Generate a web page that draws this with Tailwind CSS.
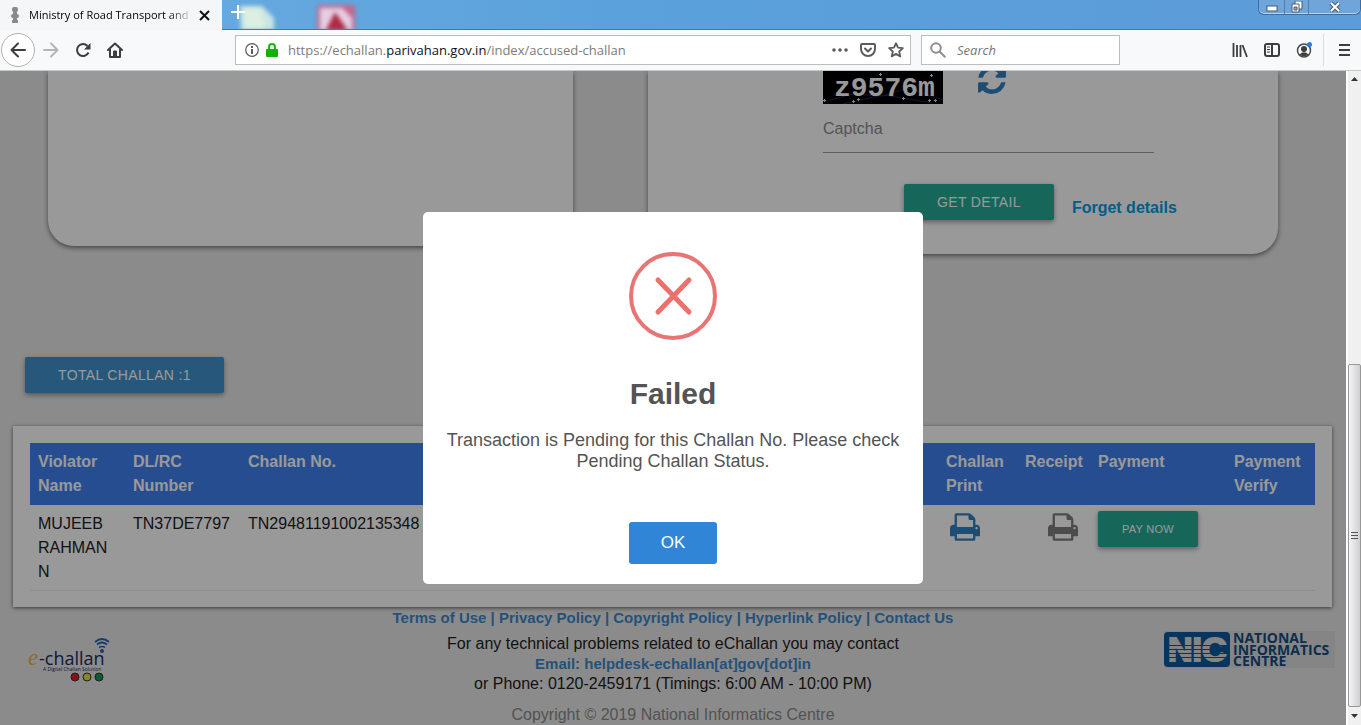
<!DOCTYPE html>
<html lang="en">
<head>
  <meta charset="UTF-8" />
  <meta name="viewport" content="width=device-width, initial-scale=1.0" />
  <title>Ministry of Road Transport and Highways</title>
  <script src="https://cdn.jsdelivr.net/npm/@tailwindcss/browser@4"></script>
</head>
<body class="h-screen flex flex-col overflow-hidden bg-[#e8e8e8] font-['Liberation_Sans',sans-serif] text-base text-[#212121]">

  <!-- Tab strip -->
  <header class="relative flex h-[30px] shrink-0 bg-linear-to-r from-[#6aade2] via-[#5aa0da] to-[#5c9cd8]">
    <div class="flex w-[222px] items-center bg-[#f5f6f7] pl-2 font-['Open_Sans',sans-serif]">
      <svg class="h-4 w-[13px] shrink-0" viewBox="0 0 13 16" fill="#8a8a8a" aria-hidden="true">
        <rect x="4" y="0" width="6" height="5" rx="2"/><rect x="5" y="5" width="4" height="2"/><rect x="3" y="7" width="8" height="4" rx="2"/><rect x="5" y="10" width="4" height="3"/><rect x="4" y="13" width="6" height="3"/>
      </svg>
      <span class="ml-2 w-[164px] whitespace-nowrap text-[11px] text-black mask-r-from-85% mask-r-to-100%">Ministry of Road Transport and</span>
      <button class="ml-[3px] flex size-4 items-center justify-center" aria-label="Close tab">
        <svg class="size-[11px]" viewBox="0 0 11 11" stroke="#111" stroke-width="2"><path d="M1 1l9 9M10 1l-9 9"/></svg>
      </button>
    </div>
    <div class="relative flex-1 overflow-hidden border-b border-[#4577ad]">
      <!-- Desktop icons seen through the glass -->
      <svg class="absolute top-0 left-0 h-[30px] w-[160px] blur-[2px]" viewBox="0 0 160 30" aria-hidden="true">
        <path d="M18 6h22l12 12v14H19z" fill="#c9e6e4"/>
        <path d="M22 8h15l5 12v12H22z" fill="#dcefe0"/>
        <rect x="95" y="5" width="38" height="28" rx="3" fill="#c4678c"/>
        <path d="M98 8h22l10 10v14H98z" fill="#e5cfe4"/>
        <path d="M103 32l10-20 14 20z" fill="#b0283f"/>
      </svg>
      <button class="absolute top-[5px] left-[9px] size-[14px]" aria-label="New tab">
        <svg class="size-[14px]" viewBox="0 0 14 14" stroke="#fff" stroke-width="2"><path d="M7 0v14M0 7h14"/></svg>
      </button>
    </div>
    <!-- Window controls -->
    <div class="absolute top-0 right-0 flex h-[15px] w-[103px] rounded-b-md border border-t-0 border-[#3f6c9e] bg-[#6fa5d9] shadow-[inset_0_-1px_0_#b5d4ef]">
      <button class="flex w-[26px] items-center justify-center border-r border-[#4f7fb2]" aria-label="Minimize">
        <svg class="h-[10px] w-3" viewBox="0 0 12 10"><rect x="1" y="4" width="10" height="5" fill="#fff" stroke="#4a5a70"/></svg>
      </button>
      <button class="flex w-6 items-center justify-center border-r border-[#4f7fb2]" aria-label="Restore">
        <svg class="h-3 w-3" viewBox="0 0 12 12" fill="#fff" stroke="#4a5a70"><path d="M4 0h7v8H4z"/><path d="M1 3h7v8H1z"/><path d="M3 6h3v3H3z" fill="#7fb0de"/></svg>
      </button>
      <button class="flex flex-1 items-center justify-center" aria-label="Close window">
        <svg class="h-3 w-3" viewBox="0 0 12 12"><path d="M2 2l8 8M10 2l-8 8" stroke="#4a5a70" stroke-width="4"/><path d="M2 2l8 8M10 2l-8 8" stroke="#fff" stroke-width="2"/></svg>
      </button>
    </div>
  </header>

  <!-- Toolbar -->
  <nav class="flex h-[41px] shrink-0 items-center border-b border-[#c8c8c8] bg-[#f8f9fa] pl-px font-['Open_Sans',sans-serif] text-[13px] text-[#3d3d3d]">
    <div class="flex w-[234px] items-center">
      <button class="flex size-[34px] items-center justify-center rounded-full border border-[#b0b0b0] bg-white" aria-label="Back">
        <svg class="size-4" viewBox="0 0 16 16" fill="none" stroke="currentColor" stroke-width="2" stroke-linecap="round" stroke-linejoin="round"><path d="M15 8H1.500M8 1.500L1.500 8 8 14.500"/></svg>
      </button>
      <button class="flex size-8 items-center justify-center text-[#b5b5b5]" aria-label="Forward">
        <svg class="size-4" viewBox="0 0 16 16" fill="none" stroke="currentColor" stroke-width="2" stroke-linecap="round" stroke-linejoin="round"><path d="M1 8h13.500M8 1.500L14.500 8 8 14.500"/></svg>
      </button>
      <button class="flex size-8 items-center justify-center" aria-label="Reload">
        <svg class="size-4" viewBox="0 0 16 16" fill="none" stroke="currentColor" stroke-width="2"><path d="M13.500 10.500A6 6 0 1 1 12.500 4"/><path d="M15.500 1v6.500H9z" fill="currentColor" stroke="none"/></svg>
      </button>
      <button class="flex size-8 items-center justify-center" aria-label="Home">
        <svg class="size-4" viewBox="0 0 16 16" fill="none" stroke="currentColor" stroke-width="2" stroke-linejoin="round" stroke-linecap="round"><path d="M1 8l7-6.500L15 8M3 7.500V15h10V7.500"/><path d="M6.500 14.500V9h3v5.500z" fill="currentColor" stroke-width="1"/></svg>
      </button>
    </div>

    <div class="flex h-[30px] flex-1 items-center border border-[#bdbdbd] bg-white pl-[9px]">
      <svg class="size-[14px]" viewBox="0 0 14 14" aria-hidden="true"><circle cx="7" cy="7" r="6.300" fill="none" stroke="#5c5c5c" stroke-width="1.200"/><rect x="6" y="6" width="2" height="5" fill="#5c5c5c"/><rect x="6" y="3" width="2" height="2" fill="#5c5c5c"/></svg>
      <svg class="ml-[7px] h-[14px] w-3" viewBox="0 0 12 14" aria-hidden="true"><path d="M3 7V4a3 3 0 0 1 6 0v3" fill="none" stroke="#12bc00" stroke-width="2"/><rect x="0" y="6" width="12" height="8" rx="1" fill="#12b005"/></svg>
      <p class="ml-[10px] flex-1 whitespace-nowrap pt-[2px] text-[#7c7c7c]">https://echallan.<span class="text-[#111]">parivahan.gov.in</span>/index/accused-challan</p>
      <button class="flex w-7 justify-center text-[#5c5c5c]" aria-label="Page actions">
        <svg class="h-4 w-4" viewBox="0 0 16 16" fill="currentColor"><circle cx="2" cy="8" r="1.800"/><circle cx="8" cy="8" r="1.800"/><circle cx="14" cy="8" r="1.800"/></svg>
      </button>
      <button class="flex w-7 justify-center text-[#5c5c5c]" aria-label="Save to Pocket">
        <svg class="h-4 w-4" viewBox="0 0 16 16" fill="none" stroke="currentColor" stroke-width="2" stroke-linecap="round" stroke-linejoin="round"><path d="M2 2h12a1 1 0 0 1 1 1v4a7 7 0 0 1-14 0V3a1 1 0 0 1 1-1z"/><path d="M5 6.500l3 3 3-3"/></svg>
      </button>
      <button class="flex w-7 justify-center text-[#5c5c5c]" aria-label="Bookmark">
        <svg class="h-4 w-4" viewBox="0 0 16 16" fill="none" stroke="currentColor" stroke-width="1.800" stroke-linejoin="round"><path d="M8 1.200l2 4.500 4.900.5-3.700 3.300 1.100 4.900L8 11.900l-4.300 2.500 1.100-4.900L1.100 6.200 6 5.700z"/></svg>
      </button>
    </div>

    <label class="ml-[10px] flex h-[30px] w-[199px] items-center border border-[#bdbdbd] bg-white pl-2">
      <svg class="h-4 w-4 shrink-0" viewBox="0 0 16 16" fill="none" stroke="#8e8e8e" stroke-width="2" stroke-linecap="round" aria-hidden="true"><circle cx="6" cy="6" r="4.800"/><path d="M9.800 9.800l5 5"/></svg>
      <input type="text" placeholder="Search" aria-label="Search" class="ml-[11px] w-full min-w-0 pt-[2px] outline-none placeholder:italic placeholder:text-[#777]" />
    </label>

    <div class="ml-[112px] flex h-full items-center pr-[10px]">
      <button aria-label="Library">
        <svg class="size-4" viewBox="0 0 16 16" fill="none" stroke="currentColor" stroke-width="1.800"><path d="M1.500 1v14M5 3v12M8.500 3v12M10.500 3l4.500 12"/></svg>
      </button>
      <button class="ml-4" aria-label="Sidebars">
        <svg class="size-4" viewBox="0 0 16 16" fill="none" stroke="currentColor" stroke-width="2"><rect x="1" y="2" width="14" height="12" rx="2"/><path d="M8 2v12"/><path d="M3 5h3M3 7.500h3M3 10h3" stroke-width="1"/></svg>
      </button>
      <button class="ml-4" aria-label="Account">
        <svg class="size-4" viewBox="0 0 16 16"><circle cx="8" cy="8.500" r="6.500" fill="none" stroke="#4a4a4a" stroke-width="1.500"/><circle cx="8" cy="7" r="3" fill="#3d3d3d"/><path d="M3.500 12.500Q8 8 12.500 12.500 8 16 3.500 12.500z" fill="#3d3d3d"/><circle cx="13.500" cy="2.500" r="2.500" fill="#2b7de0"/></svg>
      </button>
      <span class="ml-[11px] h-8 w-px bg-[#dcdcdc]"></span>
      <button class="ml-[14px]" aria-label="Open menu">
        <svg class="h-4 w-[13px]" viewBox="0 0 13 16" stroke="currentColor" stroke-width="2"><path d="M1 3h11M1 8h11M1 13h11"/></svg>
      </button>
    </div>
  </nav>

  <div class="flex min-h-0 flex-1">
    <div class="relative min-w-0 flex-1 overflow-hidden">

      <!-- Search forms -->
      <section class="grid grid-cols-[5fr_6fr] items-start gap-[75px] pr-[68px] pl-12">
        <div class="h-[175px] rounded-b-[26px] bg-white shadow-[0_2px_5px_rgba(0,0,0,0.5)]"></div>
        <form class="min-w-0 rounded-b-[26px] bg-white pr-[124px] pb-[34px] pl-[175px] shadow-[0_2px_5px_rgba(0,0,0,0.5)]">
          <div class="flex gap-[35px]">
            <svg class="h-[33px] w-[120px]" viewBox="0 0 120 33" role="img" aria-label="Captcha code">
              <rect width="120" height="33" fill="#000"/>
              <path d="M0 31l30-8 30 2 25-8 35 12M20 33l40-9 50 8" fill="none" stroke="#25255a"/>
              <text x="11" y="25" font-family="Liberation Mono, monospace" font-weight="bold" font-size="28" fill="#fff">z9576m</text>
              <path d="M0 29.500h3M1.500 28v3M29 30.500h3M30.500 29v3M34 28.500h3M35.500 27v3M79 27.500h3M80.500 26v3M105 29.500h3M106.500 28v3M111 29.500h3M112.500 28v3M107 4.500h3M108.500 3v3M56 3.500h3M57.500 2v3" stroke="#ddd"/>
            </svg>
            <button type="button" class="h-[23px]" aria-label="Refresh captcha">
              <svg class="h-[23px] w-7 fill-[#3380c0]" viewBox="0 274 1536 1262"><path d="M1511 928q0 5-1 7-64 268-268 434.500T764 1536q-146 0-282.500-55T238 1324l-129 129q-19 19-45 19t-45-19-19-45V960q0-26 19-45t45-19h448q26 0 45 19t19 45-19 45l-137 137q71 66 161 102t187 36q134 0 250-65t186-179q11-17 53-117 8-23 30-23h192q13 0 22.500 9.500t9.500 22.500zm25-800v448q0 26-19 45t-45 19h-448q-26 0-45-19t-19-45 19-45l138-138Q969 256 768 256q-134 0-250 65T332 500q-11 17-53 117-8 23-30 23H50q-13 0-22.500-9.500T18 608v-7q65-268 270-434.500T768 0q146 0 284 55.500T1297 212l130-129q19-19 45-19t45 19 19 45z"/></svg>
            </button>
          </div>
          <input type="text" placeholder="Captcha" aria-label="Captcha" class="block h-[49px] w-full border-b border-[#9e9e9e] pt-[2px] outline-none placeholder:text-[#8c8c8c]" />
          <div class="mt-[31px] ml-[81px] flex items-end gap-[18px] whitespace-nowrap">
            <button type="button" class="h-9 rounded-xs bg-[#26ab96] px-[33px] text-sm tracking-wide text-white shadow-[0_2px_5px_rgba(0,0,0,0.4)]">GET DETAIL</button>
            <a href="#" class="font-bold text-[#039be5]">Forget details</a>
          </div>
        </form>
      </section>

      <button class="mt-[103px] ml-[25px] block h-9 rounded-xs bg-[#4292cc] px-[33px] text-sm tracking-wide text-white shadow-[0_2px_5px_rgba(0,0,0,0.4)]">TOTAL CHALLAN :1</button>

      <!-- Challan list -->
      <section class="mt-[33px] mr-[14px] ml-[13px] bg-white px-[17px] pt-[17px] pb-4 shadow-[0_1px_4px_rgba(0,0,0,0.6)]">
        <table class="w-full table-fixed text-left">
          <colgroup>
            <col class="w-[95px]" /><col class="w-[115px]" /><col class="w-[190px]" /><col /><col class="w-[79px]" /><col class="w-[73px]" /><col class="w-[136px]" /><col class="w-[89px]" />
          </colgroup>
          <thead class="bg-[#4080f0] align-top text-white">
            <tr>
              <th class="px-2 py-[7px]">Violator Name</th>
              <th class="px-2 py-[7px]">DL/RC Number</th>
              <th class="px-2 py-[7px]">Challan No.</th>
              <th></th>
              <th class="px-2 py-[7px]">Challan Print</th>
              <th class="px-2 py-[7px]">Receipt</th>
              <th class="px-2 py-[7px]">Payment</th>
              <th class="px-2 py-[7px]">Payment Verify</th>
            </tr>
          </thead>
          <tbody class="align-top">
            <tr class="border-b border-[#efebef]">
              <td class="px-2 pt-[7px] pb-[6px]">MUJEEB RAHMAN N</td>
              <td class="px-2 pt-[7px]">TN37DE7797</td>
              <td class="px-2 pt-[7px]">TN29481191002135348</td>
              <td></td>
              <td class="px-3 pt-2">
                <a href="#" aria-label="Print challan"><svg class="h-7 w-[30px] fill-[#3380c0]" viewBox="0 128 1664 1536"><path d="M384 1536h896v-256H384v256zm0-640h896V512h-160q-40 0-68-28t-28-68V256H384v640zm1152 64q0-26-19-45t-45-19-45 19-19 45 19 45 45 19 45-19 19-45zm128 0v416q0 13-9.500 22.500t-22.500 9.500h-224v160q0 40-28 68t-68 28H352q-40 0-68-28t-28-68v-160H32q-13 0-22.500-9.500T0 1376V960q0-79 56.500-135.500T192 768h64V224q0-40 28-68t68-28h672q40 0 88 20t76 48l152 152q28 28 48 76t20 88v256h64q79 0 135.500 56.500T1664 960z"/></svg></a>
              </td>
              <td class="px-3 pt-2">
                <a href="#" class="flex justify-end" aria-label="Print receipt"><svg class="h-7 w-[30px] fill-[#807f80]" viewBox="0 128 1664 1536"><path d="M384 1536h896v-256H384v256zm0-640h896V512h-160q-40 0-68-28t-28-68V256H384v640zm1152 64q0-26-19-45t-45-19-45 19-19 45 19 45 45 19 45-19 19-45zm128 0v416q0 13-9.500 22.500t-22.500 9.500h-224v160q0 40-28 68t-68 28H352q-40 0-68-28t-28-68v-160H32q-13 0-22.500-9.500T0 1376V960q0-79 56.500-135.500T192 768h64V224q0-40 28-68t68-28h672q40 0 88 20t76 48l152 152q28 28 48 76t20 88v256h64q79 0 135.500 56.500T1664 960z"/></svg></a>
              </td>
              <td class="px-2 pt-[6px]">
                <button class="h-9 w-[100px] rounded-xs bg-[#26ab96] text-[11px] tracking-wide text-white shadow-[0_2px_5px_rgba(0,0,0,0.4)]">PAY NOW</button>
              </td>
              <td></td>
            </tr>
          </tbody>
        </table>
      </section>

      <!-- Footer -->
      <footer class="grid grid-cols-[1fr_auto_1fr] items-start px-[11px] text-center leading-5">
        <svg class="mt-[30px] ml-[17px] h-[50px] w-[84px] overflow-visible" viewBox="0 0 84 50" role="img" aria-label="e-challan">
          <text x="0" y="28" font-family="Liberation Serif, serif" font-style="italic" font-size="23" fill="#e8b44c">e</text>
          <text x="11" y="28" font-family="Open Sans, sans-serif" font-size="18" fill="#1d2860">-challan</text>
          <text x="15" y="34" font-family="Open Sans, sans-serif" font-size="5" fill="#1d2860">A Digital Challan Solution</text>
          <circle cx="74" cy="14" r="2" fill="#2d62b8"/>
          <path d="M71 10.500q3-2 6 0M69 7.500q5-4 10 0M67 5q7-6 14 0" fill="none" stroke="#2d62b8" stroke-width="1.700"/>
          <circle cx="47" cy="40" r="4" fill="#e51c24" stroke="#333"/>
          <circle cx="59" cy="40" r="4" fill="#e4e43a" stroke="#333"/>
          <circle cx="71" cy="40" r="4" fill="#179a52" stroke="#333"/>
        </svg>
        <div>
          <p class="text-[15px] leading-[22px] font-bold text-[#3f88c8]">
            <a href="#">Terms of Use</a> | <a href="#">Privacy Policy</a> | <a href="#">Copyright Policy</a> | <a href="#">Hyperlink Policy</a> | <a href="#">Contact Us</a>
          </p>
          <p class="mt-[5px]">For any technical problems related to eChallan you may contact</p>
          <p><a href="#" class="text-[15px] font-bold text-[#3f88c8]">Email: helpdesk-echallan[at]gov[dot]in</a></p>
          <p>or Phone: 0120-2459171 (Timings: 6:00 AM - 10:00 PM)</p>
          <p class="mt-[11px] text-[#8a8a8a]">Copyright © 2019 National Informatics Centre</p>
        </div>
        <svg class="mt-6 h-[37px] w-[171px] justify-self-end overflow-visible" viewBox="0 0 171 37" role="img" aria-label="National Informatics Centre">
          <rect width="171" height="37" fill="#dedede"/>
          <rect x="0" y="1" width="66" height="35" rx="4" fill="#10589c"/>
          <text x="4" y="30" font-family="Liberation Sans, sans-serif" font-weight="bold" font-size="34" fill="#dedede" stroke="#dedede" stroke-width="2">NIC</text>
          <path d="M2 14.500h62M2 18.500h62M2 22.500h62M2 26.500h62" stroke="#10589c" stroke-width="1"/>
          <g font-family="Open Sans, sans-serif" font-weight="bold" font-size="14" fill="#154c80">
            <text x="69" y="12">NATIONAL</text>
            <text x="69" y="24">INFORMATICS</text>
            <text x="69" y="35">CENTRE</text>
          </g>
        </svg>
      </footer>

      <!-- Alert -->
      <div class="absolute inset-0 flex items-center justify-center bg-black/40">
        <div role="dialog" aria-labelledby="alert-title" class="flex w-[500px] flex-col items-center rounded-[5px] bg-white px-5 pt-10 pb-5 text-center text-[#545454]">
          <svg class="size-[88px]" viewBox="0 0 88 88" fill="none" stroke="#e87474" stroke-width="4" aria-hidden="true"><circle cx="44" cy="44" r="42"/><path d="M29 28l31 32M60 28L29 60" stroke="#ec706c" stroke-width="5" stroke-linecap="round"/></svg>
          <h2 id="alert-title" class="mt-9 text-3xl font-bold">Failed</h2>
          <p class="mt-[18px] text-lg leading-[21px]">Transaction is Pending for this Challan No. Please check Pending Challan Status.</p>
          <button class="mt-[50px] h-[42px] rounded-[3px] bg-[#3085d6] px-8 text-[17px] text-white">OK</button>
        </div>
      </div>
    </div>

    <!-- Scrollbar -->
    <div class="flex w-[15px] shrink-0 flex-col items-center border-l-2 border-white bg-[#f0f0f0]">
      <svg class="mt-[6px] h-1 w-[7px]" viewBox="0 0 7 4" fill="#333"><path d="M0 4l3.500-4L7 4z"/></svg>
      <div class="mt-auto flex h-[343px] w-full items-center justify-center rounded-xs border border-[#979797] bg-linear-to-r from-[#f5f5f5] to-[#cfcfd2]">
        <svg class="h-2 w-[7px]" viewBox="0 0 7 8" stroke="#555"><path d="M0 .5h7M0 3.500h7M0 6.500h7"/></svg>
      </div>
      <svg class="mt-[7px] mb-[7px] h-1 w-[7px]" viewBox="0 0 7 4" fill="#333"><path d="M0 0l3.500 4L7 0z"/></svg>
    </div>
  </div>

</body>
</html>
